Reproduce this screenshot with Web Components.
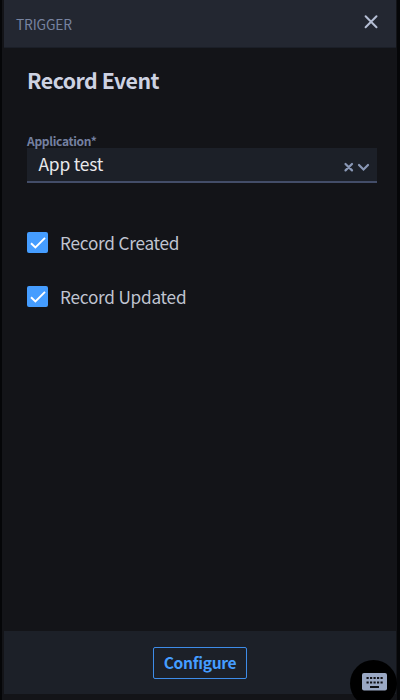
<!DOCTYPE html>
<html lang="en">
<head>
<meta charset="utf-8">
<title>Trigger</title>
<style>
html,body{margin:0;height:100%;background:#050608;overflow:hidden}
body{font-family:"Noto Sans CJK SC","Noto Sans",sans-serif;color:#c9cede}
</style>
</head>
<body>
<trigger-panel heading="Record Event">
  <panel-header slot="header">TRIGGER</panel-header>
  <select-field label="Application*">App test</select-field>
  <check-option>Record Created</check-option>
  <check-option>Record Updated</check-option>
  <outline-button slot="footer">Configure</outline-button>
</trigger-panel>
<keyboard-badge></keyboard-badge>
<script>
const define = (name, html, setup) => customElements.define(name, class extends HTMLElement {
  constructor() {
    super();
    this.attachShadow({mode: 'open'}).innerHTML = html;
  }
  connectedCallback() { if (setup) setup(this, this.shadowRoot); }
});

define('trigger-panel', `
<style>
:host{display:flex;flex-direction:column;box-sizing:border-box;height:700px;margin:0 3px 0 2px;padding:0 1px 6px 2px;background:#131418}
main{flex:1;padding:16px 19px 0 23px;display:flex;flex-direction:column}
h1{margin:0 0 39px;font-size:21.3px;line-height:32px;letter-spacing:-.5px;font-weight:700;color:#cdd2e2}
footer{height:63px;background:#1c2028;display:flex;align-items:center;justify-content:center}
</style>
<slot name="header"></slot>
<main><h1></h1><slot></slot></main>
<footer><slot name="footer"></slot></footer>`,
(el, root) => { root.querySelector('h1').textContent = el.getAttribute('heading'); });

define('panel-header', `
<style>
:host{display:flex;align-items:center;justify-content:space-between;height:48px;box-sizing:border-box;padding:1px 17px 0 12px;background:#232731;color:#7783a0;font-size:13.8px;letter-spacing:-.15px;line-height:20px;border-bottom:1px solid #1b1f28}
svg{width:16px;height:16px;margin-top:-4px;display:block}
</style>
<span><slot></slot></span>
<svg viewBox="0 0 16 16" fill="none" stroke="#b5bed4" stroke-width="2" stroke-linecap="round"><path d="M2.6 2.3 13.5 13.2M13.5 2.3 2.6 13.2"/></svg>`);

define('select-field', `
<style>
:host{display:block;margin-bottom:46px}
label{display:block;font-size:12px;line-height:11px;letter-spacing:-.3px;font-weight:700;color:#7480a0;height:13px}
.box{display:flex;box-sizing:border-box;height:35px;padding:0 7px 0 11.5px;background:#1c2028;border-bottom:2px solid #434d68;align-items:center}
span{flex:1;font-size:17.4px;line-height:26px;letter-spacing:-.2px;color:#e8e9ec;margin-top:-1px}
svg{width:28px;height:12px;margin-top:5px}
</style>
<label></label>
<div class="box"><span><slot></slot></span>
<svg viewBox="0 0 28 12" fill="none" stroke="#8a98b6" stroke-width="2.2" stroke-linecap="round"><path d="M3.5 3 10 9.4M10 3 3.5 9.4M17 4 21.5 8.5 26 4"/></svg></div>`,
(el, root) => { root.querySelector('label').textContent = el.getAttribute('label'); });

define('check-option', `
<style>
:host{display:flex;align-items:center;height:26px;margin-bottom:28px;font-size:17.2px;line-height:26px;letter-spacing:-.23px;color:#c0c5d1}
svg{width:21px;height:21px;margin:0 12px 0 0}
span{padding-top:1px}
</style>
<svg viewBox="0 0 21 21"><rect width="21" height="21" rx="2" fill="#459dff"/><path d="M4 11.2 8.4 15.4 18 5.8" fill="none" stroke="#fff" stroke-width="1.9"/></svg>
<span><slot></slot></span>`);

define('outline-button', `
<style>
:host{display:flex;box-sizing:border-box;width:94px;height:32px;border:1px solid #3e8ce8;border-radius:2px;align-items:center;justify-content:center;color:#459dff;font-size:15.6px;letter-spacing:-.3px;font-weight:700;line-height:24px}
span{margin-top:-1px}
</style>
<span><slot></slot></span>`);

define('keyboard-badge', `
<style>
:host{position:absolute;left:350px;top:660px;width:47px;height:47px;border-radius:50%;background:#000}
svg{display:block;width:26px;height:18px;margin:13px 0 0 12px}
</style>
<svg viewBox="0 0 26 18"><rect width="25" height="17.5" rx="2" fill="#9aa8c4"/>
<path d="M4.5 5h2.2m1.3 0h2.2m1.3 0h2.2m1.3 0h2.2m1.3 0h2.2M4.5 9.5h2.2m1.3 0h2.2m1.3 0h2.2m1.3 0h2.2m1.3 0h2.2M8 14h9" stroke="#101116" stroke-width="2.2"/></svg>`);
</script>
</body>
</html>
